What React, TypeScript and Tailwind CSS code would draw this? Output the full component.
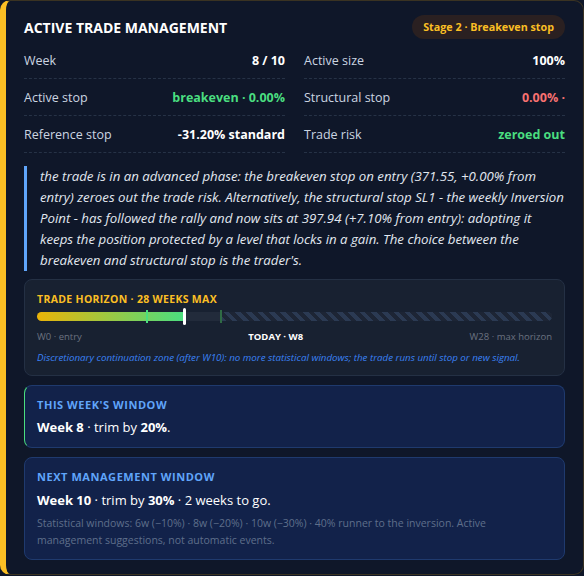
import React from "react";

const Row = ({ label, value, valueClass }: { label: string; value: string; valueClass: string }) => (
  <div className="flex items-center justify-between h-[37px] pt-[3px] border-b border-dashed border-[#263246]">
    <span className="text-[#cbd5e1]">{label}</span>
    <span className={"font-bold " + valueClass}>{value}</span>
  </div>
);

export default function App() {
  return (
    <div className="w-[584px] h-[576px] bg-[#0f1729]" style={{ fontFamily: '"Open Sans", "Noto Sans", sans-serif' }}>
      <div className="h-[575px] bg-[#0f1729] border border-[#3a3322] border-l-[6px] border-l-[#fbbf24] rounded-[10px] pl-[18px] pr-[18px] pt-[14px] text-[12.5px]">
        <div className="flex items-center justify-between h-[24px]">
          <h1 className="text-[14px] font-bold text-white">ACTIVE TRADE MANAGEMENT</h1>
          <span className="h-[24px] px-[11px] rounded-full bg-[#2a2021] text-[#fbbf24] font-bold text-[10.75px] flex items-center">Stage 2 · Breakeven stop</span>
        </div>
        <div className="grid grid-cols-2 gap-x-[19px] mt-[3px]">
          <Row label="Week" value="8 / 10" valueClass="text-white" />
          <Row label="Active size" value="100%" valueClass="text-white" />
          <Row label="Active stop" value="breakeven · 0.00%" valueClass="text-[#4ade80]" />
          <Row label="Structural stop" value="0.00% ·" valueClass="text-[#f87171]" />
          <Row label="Reference stop" value="-31.20% standard" valueClass="text-white" />
          <Row label="Trade risk" value="zeroed out" valueClass="text-[#4ade80]" />
        </div>
        <div className="mt-[13px] border-l-[3px] border-[#60a5fa] pl-[13px] italic text-[#e2e8f0] text-[13.25px] leading-[21px] whitespace-nowrap">
          the trade is in an advanced phase: the breakeven stop on entry (371.55, +0.00% from
          <br />
          entry) zeroes out the trade risk. Alternatively, the structural stop SL1 - the weekly Inversion
          <br />
          Point - has followed the rally and now sits at 397.94 (+7.10% from entry): adopting it
          <br />
          keeps the position protected by a level that locks in a gain. The choice between the
          <br />
          breakeven and structural stop is the trader's.
        </div>
        <div className="mt-[8px] h-[97px] rounded-[8px] bg-[#182131] border border-[#243044] px-[12px] pt-[12px]">
          <div className="text-[#fbbf24] font-bold text-[10.5px] leading-[14px] tracking-[0.03em]">TRADE HORIZON · 28 WEEKS MAX</div>
          <div className="relative mt-[6px] h-[9px] rounded-full bg-[#222b3b]">
            <div className="absolute left-0 top-0 h-full w-[147px] rounded-l-full" style={{ background: "linear-gradient(90deg,#eab308,#4ade80)" }} />
            <div
              className="absolute top-0 h-full left-[184px] right-0 rounded-r-full"
              style={{ backgroundImage: "repeating-linear-gradient(45deg, #2b3a53 0 4px, #1d2535 4px 8px)" }}
            />
            <div className="absolute left-[109px] top-[-2px] h-[13px] w-[2px] bg-[#4ade80]" />
            <div className="absolute left-[146px] top-[-4px] h-[17px] w-[3px] bg-white rounded-sm" />
            <div className="absolute left-[183px] top-[-2px] h-[13px] w-[2px] bg-[#2f6b45]" />
          </div>
          <div className="flex justify-between mt-[9px] text-[9.5px] leading-[14px]">
            <span className="text-[#6b7280]">W0 · entry</span>
            <span className="text-white font-bold">TODAY · W8</span>
            <span className="text-[#6b7280]">W28 · max horizon</span>
          </div>
          <div className="mt-[7px] text-[9.75px] leading-[14px] italic text-[#3b82f6]">
            Discretionary continuation zone (after W10): no more statistical windows; the trade runs until stop or new signal.
          </div>
        </div>
        <div className="mt-[9px] h-[63px] rounded-[8px] bg-[#12224a] border border-[#1f3a6e] border-l-[#4ade80] px-[12px] pt-[12px]">
          <div className="text-[#60a5fa] font-bold text-[11px] leading-[14px] tracking-[0.05em]">THIS WEEK'S WINDOW</div>
          <div className="mt-[6px] text-[13px] leading-[18px] text-white">
            <b>Week 8</b> · trim by <b>20%</b>.
          </div>
        </div>
        <div className="mt-[9px] h-[103px] rounded-[8px] bg-[#12224a] border border-[#1f3a6e] px-[12px] pt-[12px]">
          <div className="text-[#60a5fa] font-bold text-[11px] leading-[14px] tracking-[0.05em]">NEXT MANAGEMENT WINDOW</div>
          <div className="mt-[7px] text-[13px] leading-[18px] text-white">
            <b>Week 10</b> · trim by <b>30%</b> · 2 weeks to go.
          </div>
          <div className="mt-[6px] text-[10.5px] leading-[17px] text-[#5f6f8a]">
            Statistical windows: 6w (−10%) · 8w (−20%) · 10w (−30%) · 40% runner to the inversion. Active management suggestions, not automatic events.
          </div>
        </div>
      </div>
    </div>
  );
}
